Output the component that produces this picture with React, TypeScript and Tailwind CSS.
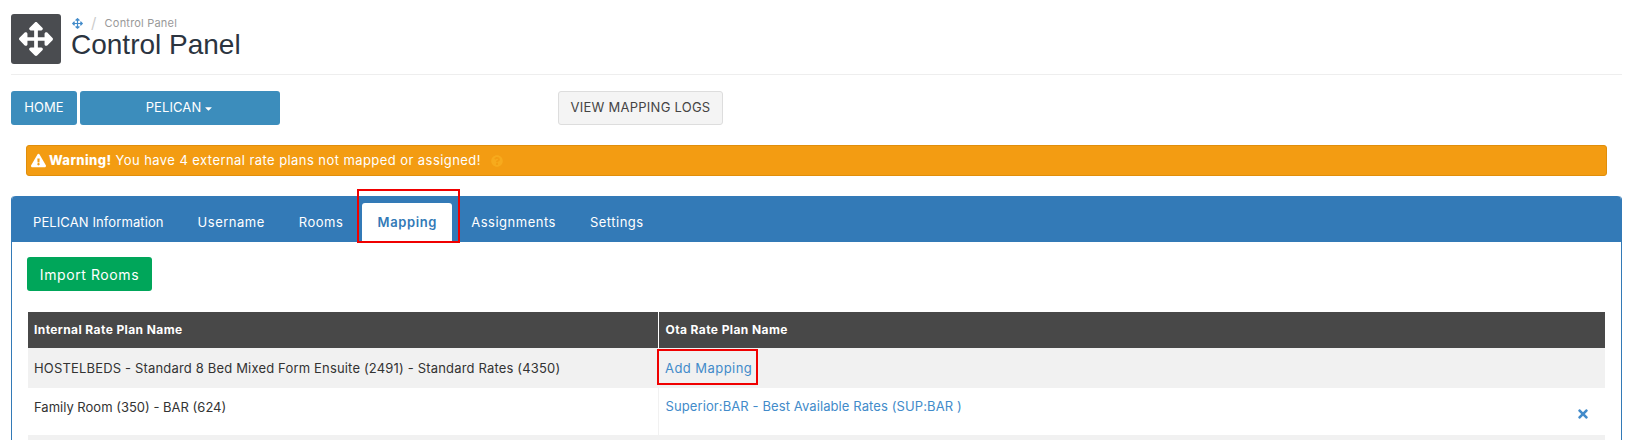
import { FaArrowsAlt, FaCaretDown, FaExclamationTriangle, FaQuestionCircle, FaTimes } from "react-icons/fa";

const tabs = ["PELICAN Information", "Username", "Rooms", "Mapping", "Assignments", "Settings"];

function Tabs() {
  return (
    <div className="flex h-[46px] items-end rounded-t-[4px] bg-[#337ab7] pl-[4px] text-[13px] leading-[39px] text-white">
      {tabs.map((t) =>
        t === "Mapping" ? (
          <div key={t} className="relative mx-[2px] h-[39px] w-[90px] rounded-t-[3px] bg-white text-center font-semibold tracking-[0.6px] text-[#337ab7]">
            {t}
            {/* red annotation from the screenshot */}
            <div className="absolute left-[-5px] top-[-14px] h-[54px] w-[103px] border-[2px] border-[#f00000]" />
          </div>
        ) : (
          <div key={t} className={t === "PELICAN Information" ? "h-[39px] px-[17px] tracking-[0.1px]" : "h-[39px] px-[17px] tracking-[0.5px]"}>
            {t}
          </div>
        ),
      )}
    </div>
  );
}

function MappingTable() {
  return (
    <table className="ml-[1px] w-[1577px] table-fixed border-collapse text-[13px]">
      <thead>
        <tr className="h-[36px] bg-[#484848] text-left text-[12px] font-extrabold tracking-[0.4px] text-white">
          <th className="w-[630px] border-r border-white pl-[6px]">Internal Rate Plan Name</th>
          <th className="pl-[7px]">Ota Rate Plan Name</th>
        </tr>
      </thead>
      <tbody>
        <tr className="h-[40px] bg-[#f1f1f1] text-[#333]">
          <td className="pl-[6px] pt-[2px] tracking-[0.17px]">HOSTELBEDS - Standard 8 Bed Mixed Form Ensuite (2491) - Standard Rates (4350)</td>
          <td className="pl-[7px] pt-[2px]">
            <span className="relative tracking-[0.45px] text-[#428bca]">
              Add Mapping
              <span className="absolute left-[-8px] top-[-11px] h-[36px] w-[101px] border-[2px] border-[#f00000]" />
            </span>
          </td>
        </tr>
        <tr className="h-[47px] text-[#333]">
          <td className="border-r border-[#f1f1f1] pb-[8px] pl-[6px]">Family Room (350) - BAR (624)</td>
          <td className="pl-[7px]">
            <div className="flex pr-[15px]">
              <span className="pb-[10px] tracking-[0.1px] text-[#428bca]">Superior:BAR - Best Available Rates (SUP:BAR )</span>
              <FaTimes className="ml-auto mt-[10px] text-[14px] text-[#428bca]" />
            </div>
          </td>
        </tr>
        <tr className="h-[8px] bg-[#f1f1f1]">
          <td />
          <td />
        </tr>
      </tbody>
    </table>
  );
}

export default function App() {
  return (
    <div className="h-[440px] w-[1633px] overflow-hidden bg-white pl-[11px] pr-[11px] pt-[14px] font-['Inter',sans-serif]">
      <div className="flex h-[61px] border-b border-[#eeeeee]">
        <div className="flex h-[50px] w-[50px] items-center justify-center rounded-[3px] bg-[#4a4c50] text-[34px] text-white">
          <FaArrowsAlt />
        </div>
        <div className="ml-[10px]">
          <div className="flex h-[18px] items-center text-[11px] tracking-[0.2px] text-[#999]">
            <FaArrowsAlt className="ml-[1px] text-[11px] text-[#428bca]" />
            <span className="ml-[8px] mr-[8px] text-[15px] text-[#ccc]">/</span>
            Control Panel
          </div>
          <h1 className="mt-[-2px] font-['Liberation_Sans',sans-serif] text-[28px] leading-[30px] text-[#2b3440]">Control Panel</h1>
        </div>
      </div>

      <div className="mt-[16px] flex h-[34px] text-[13px] tracking-[0.1px] text-white">
        <div className="flex w-[66px] items-center justify-center rounded-[3px] bg-[#3c8dbc]">HOME</div>
        <div className="ml-[3px] flex w-[200px] items-center justify-center rounded-[3px] bg-[#3c8dbc]">
          PELICAN
          <FaCaretDown className="ml-[2px] text-[11px]" />
        </div>
        <div className="ml-[278px] flex w-[165px] items-center justify-center rounded-[3px] border border-[#dddddd] bg-[#f4f4f4] tracking-[0.25px] text-[#444]">
          VIEW MAPPING LOGS
        </div>
      </div>

      <div className="ml-[15px] mr-[15px] mt-[20px] flex h-[31px] items-center rounded-[3px] border border-[#e08e0b] bg-[#f39c12] pl-[4px] text-[13px] text-white">
        <FaExclamationTriangle className="text-[15px]" />
        <span className="ml-[3px] font-extrabold tracking-[0.4px]">Warning!</span>
        <span className="ml-[4px] tracking-[0.43px]">You have 4 external rate plans not mapped or assigned!</span>
        <FaQuestionCircle className="ml-[10px] text-[12px] text-[#f7aa1c]" />
      </div>

      <div className="mt-[20px] rounded-t-[4px] border-x border-[#337ab7]">
        <Tabs />
        <div className="px-[15px] pt-[15px]">
          <div className="flex h-[34px] w-[125px] items-center justify-center rounded-[3px] bg-[#00a65a] text-[14px] tracking-[0.6px] text-white">Import Rooms</div>
          <div className="mt-[21px]">
            <MappingTable />
          </div>
        </div>
      </div>
    </div>
  );
}
